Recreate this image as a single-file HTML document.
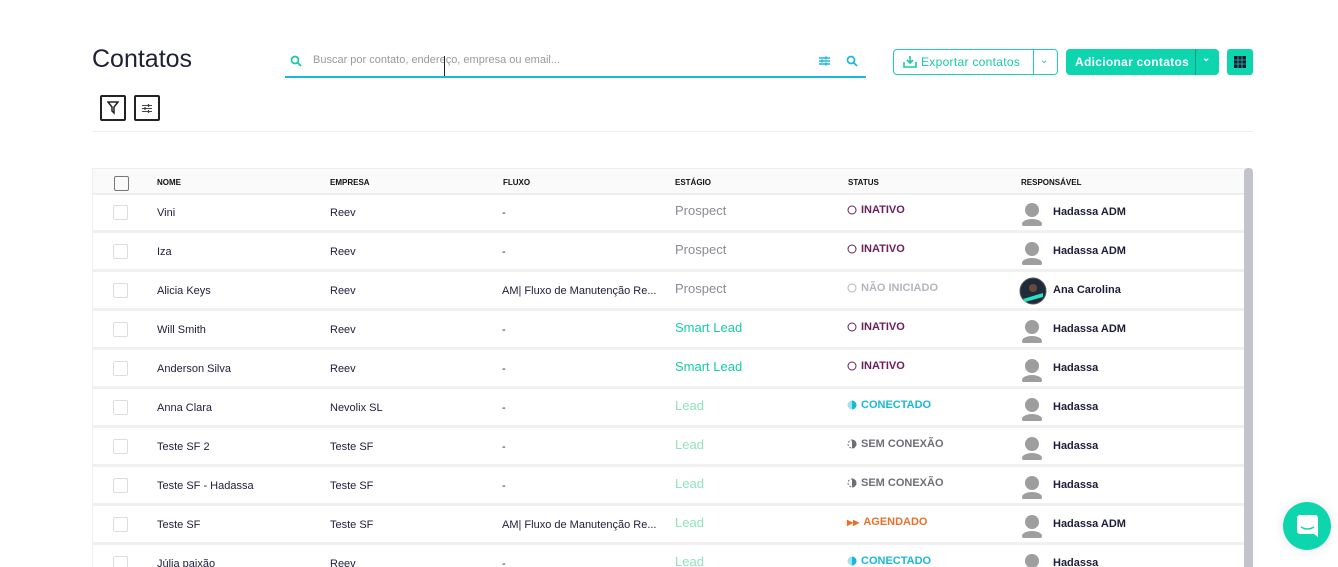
<!DOCTYPE html>
<html style="width:1338px;height:567px;overflow:hidden"><head><meta charset="utf-8"><style>
*{box-sizing:border-box;margin:0;padding:0}
body{width:1338px;height:567px;overflow:hidden;background:#fff;font-family:"Liberation Sans",sans-serif;color:#1d1d3a;position:relative}
.a{position:absolute}
h1{position:absolute;left:92px;top:45px;font-size:25px;font-weight:400;color:#1f2033}
.search{left:285px;top:46px;width:581px;height:32px;border-bottom:2px solid #1ab8d8}
.btn{height:26px;border-radius:4px;font-size:12px;display:flex;align-items:center}
.tbl{left:92px;top:168px;width:1153px;height:400px;border:1px solid #eee;border-bottom:none}
.hd{left:0;top:0;width:1153px;height:26px;background:#fafafa;border-bottom:2px solid #eee;font-size:8px;font-weight:700;color:#111}
.row{height:39px;border-bottom:3px solid #f0f0f0;font-size:11px;color:#1d1d3a}
.cb{position:absolute;left:21px;top:11px;width:15px;height:15px;border:1.5px solid #ddd;border-radius:2px}
.c{position:absolute;top:13px}
.st{font-size:13px;top:9px}
.ss{font-size:11px;font-weight:700;top:10px;display:flex;align-items:center;gap:4px}
.av{position:absolute;left:928px;top:8px;width:24px;height:24px}
.rn{position:absolute;left:961px;top:12px;font-weight:700;font-size:11px;color:#1d1d3a}
.R{position:absolute;left:92px;width:1152px}
</style></head><body>
<h1>Contatos</h1>
<div class="a search">
<svg class="a" style="left:5px;top:9px" width="12" height="12" viewBox="0 0 12 12"><circle cx="5" cy="5" r="3.5" fill="none" stroke="#14c9a6" stroke-width="1.7"/><path d="M7.5 7.5L11 11" stroke="#14c9a6" stroke-width="1.8"/></svg>
<div class="a" style="left:28px;top:8px;font-size:11px;color:#999">Buscar por contato, endereço, empresa ou email...</div>
<div class="a" style="left:159px;top:10px;width:1px;height:20px;background:#222"></div>
<svg class="a" style="left:533px;top:9px" width="13" height="12" viewBox="0 0 13 12"><path d="M1 3h11M1 6h11M1 9h11" stroke="#1ab8d8" stroke-width="1.4"/><path d="M8 1.5v3M4 4.5v3M8 7.5v3" stroke="#1ab8d8" stroke-width="1.6"/></svg>
<svg class="a" style="left:561px;top:9px" width="12" height="12" viewBox="0 0 12 12"><circle cx="5" cy="5" r="3.5" fill="none" stroke="#1ab8d8" stroke-width="1.7"/><path d="M7.5 7.5L11 11" stroke="#1ab8d8" stroke-width="1.8"/></svg>
</div>
<div class="a btn" style="left:893px;top:49px;width:165px;border:1px solid #19d3ae;color:#19c9a6;background:#fff">
<svg style="margin:0 4px 0 9px" width="14" height="12" viewBox="0 0 14 12"><path d="M7 0v7M4 4l3 3 3-3M1 6v5h12V6" fill="none" stroke="#19c9a6" stroke-width="1.6"/></svg>
<span style="font-size:12px;letter-spacing:.3px">Exportar contatos</span>
<span style="position:absolute;left:139px;top:0;height:24px;width:1px;background:#19d3ae"></span>
<span style="position:absolute;left:146px;top:5px;font-size:10px">&#8964;</span></div>
<div class="a btn" style="left:1066px;top:49px;width:153px;background:#0dd6ae;color:#fff;font-weight:700">
<span style="margin-left:9px;letter-spacing:.3px">Adicionar contatos</span>
<span style="position:absolute;left:129px;top:0;height:26px;width:1px;background:#089f85"></span>
<span style="position:absolute;left:136px;top:4px;font-size:10px">&#8964;</span></div>
<div class="a" style="left:1227px;top:49px;width:26px;height:26px;background:#0dd6ae;border-radius:3px">
<svg class="a" style="left:7px;top:7px" width="12" height="12" viewBox="0 0 12 12"><rect width="12" height="12" fill="#141432"/><path d="M0 4h12M0 8h12M4 0v12M8 0v12" stroke="#0dd6ae" stroke-width="0.8"/></svg></div>
<div class="a" style="left:100px;top:95px;width:26px;height:26px;border:2px solid #222;border-radius:2px"><svg class="a" style="left:5px;top:4px" width="12" height="14" viewBox="0 0 12 14"><path d="M1 1h10L7 6v6L5 10V6z" fill="none" stroke="#222" stroke-width="1.5"/></svg></div>
<div class="a" style="left:134px;top:95px;width:26px;height:26px;border:2px solid #222;border-radius:2px"><svg class="a" style="left:5px;top:6px" width="12" height="11" viewBox="0 0 12 11"><path d="M1 2.5h10M1 5.5h10M1 8.5h10" stroke="#444" stroke-width="1"/><path d="M7.5 1v3M4 4v3M7.5 7v3" stroke="#444" stroke-width="1.3"/></svg></div>
<div class="a" style="left:92px;top:131px;width:1161px;height:1px;background:#eee"></div>
<div class="a tbl">
<div class="a hd"><div class="cb" style="top:7px;border-color:#777;width:15px;height:15px"></div>
<span class="c" style="left:64px;top:9px">NOME</span><span class="c" style="left:237px;top:9px">EMPRESA</span><span class="c" style="left:410px;top:9px">FLUXO</span><span class="c" style="left:582px;top:9px">ESTÁGIO</span><span class="c" style="left:755px;top:9px">STATUS</span><span class="c" style="left:928px;top:9px">RESPONSÁVEL</span></div>
</div>
<div class="R row" style="top:194px"><div class="cb"></div><span class="c" style="left:65px">Vini</span><span class="c" style="left:238px">Reev</span><span class="c" style="left:410px">-</span><span class="c st" style="left:583px;color:#8a8a95">Prospect</span><span class="c ss" style="left:755px;color:#6b1d5c"><svg width="10" height="10"><circle cx="5" cy="5" r="4" fill="none" stroke="#6b1d5c"/></svg>INATIVO</span><svg class="av"><circle cx="12" cy="8" r="7" fill="#9e9e9e"/><ellipse cx="12" cy="22" rx="10" ry="5" fill="#9e9e9e"/></svg><span class="rn">Hadassa ADM</span></div>
<div class="R row" style="top:233px"><div class="cb"></div><span class="c" style="left:65px">Iza</span><span class="c" style="left:238px">Reev</span><span class="c" style="left:410px">-</span><span class="c st" style="left:583px;color:#8a8a95">Prospect</span><span class="c ss" style="left:755px;color:#6b1d5c"><svg width="10" height="10"><circle cx="5" cy="5" r="4" fill="none" stroke="#6b1d5c"/></svg>INATIVO</span><svg class="av"><circle cx="12" cy="8" r="7" fill="#9e9e9e"/><ellipse cx="12" cy="22" rx="10" ry="5" fill="#9e9e9e"/></svg><span class="rn">Hadassa ADM</span></div>
<div class="R row" style="top:272px"><div class="cb"></div><span class="c" style="left:65px">Alicia Keys</span><span class="c" style="left:238px">Reev</span><span class="c" style="left:410px">AM| Fluxo de Manutenção Re...</span><span class="c st" style="left:583px;color:#8a8a95">Prospect</span><span class="c ss" style="left:755px;color:#b5b5bd"><svg width="10" height="10"><circle cx="5" cy="5" r="4" fill="none" stroke="#b5b5bd"/></svg>NÃO INICIADO</span><svg class="av" style="left:927px;top:5px;width:28px;height:28px"><circle cx="14" cy="14" r="13" fill="#1f2b3a" stroke="#555"/><circle cx="14" cy="11" r="4" fill="#6b4a3a"/><path d="M4 22l20-6v4L6 25z" fill="#2de0c0"/></svg><span class="rn">Ana Carolina</span></div>
<div class="R row" style="top:311px"><div class="cb"></div><span class="c" style="left:65px">Will Smith</span><span class="c" style="left:238px">Reev</span><span class="c" style="left:410px">-</span><span class="c st" style="left:583px;color:#17cda5">Smart Lead</span><span class="c ss" style="left:755px;color:#6b1d5c"><svg width="10" height="10"><circle cx="5" cy="5" r="4" fill="none" stroke="#6b1d5c"/></svg>INATIVO</span><svg class="av"><circle cx="12" cy="8" r="7" fill="#9e9e9e"/><ellipse cx="12" cy="22" rx="10" ry="5" fill="#9e9e9e"/></svg><span class="rn">Hadassa ADM</span></div>
<div class="R row" style="top:350px"><div class="cb"></div><span class="c" style="left:65px">Anderson Silva</span><span class="c" style="left:238px">Reev</span><span class="c" style="left:410px">-</span><span class="c st" style="left:583px;color:#17cda5">Smart Lead</span><span class="c ss" style="left:755px;color:#6b1d5c"><svg width="10" height="10"><circle cx="5" cy="5" r="4" fill="none" stroke="#6b1d5c"/></svg>INATIVO</span><svg class="av"><circle cx="12" cy="8" r="7" fill="#9e9e9e"/><ellipse cx="12" cy="22" rx="10" ry="5" fill="#9e9e9e"/></svg><span class="rn">Hadassa</span></div>
<div class="R row" style="top:389px"><div class="cb"></div><span class="c" style="left:65px">Anna Clara</span><span class="c" style="left:238px">Nevolix SL</span><span class="c" style="left:410px">-</span><span class="c st" style="left:583px;color:#8fe3bd">Lead</span><span class="c ss" style="left:755px;color:#1ab8d8"><svg width="10" height="10"><circle cx="5" cy="5" r="4.5" fill="#9fe3f0"/><path d="M5 0.5a4.5 4.5 0 0 1 0 9z" fill="#1ab8d8"/></svg>CONECTADO</span><svg class="av"><circle cx="12" cy="8" r="7" fill="#9e9e9e"/><ellipse cx="12" cy="22" rx="10" ry="5" fill="#9e9e9e"/></svg><span class="rn">Hadassa</span></div>
<div class="R row" style="top:428px"><div class="cb"></div><span class="c" style="left:65px">Teste SF 2</span><span class="c" style="left:238px">Teste SF</span><span class="c" style="left:410px">-</span><span class="c st" style="left:583px;color:#8fe3bd">Lead</span><span class="c ss" style="left:755px;color:#6e6e7a"><svg width="10" height="10"><circle cx="5" cy="5" r="4" fill="none" stroke="#6e6e7a" stroke-dasharray="2 1.5"/><path d="M5 0.5a4.5 4.5 0 0 1 0 9z" fill="#6e6e7a"/></svg>SEM CONEXÃO</span><svg class="av"><circle cx="12" cy="8" r="7" fill="#9e9e9e"/><ellipse cx="12" cy="22" rx="10" ry="5" fill="#9e9e9e"/></svg><span class="rn">Hadassa</span></div>
<div class="R row" style="top:467px"><div class="cb"></div><span class="c" style="left:65px">Teste SF - Hadassa</span><span class="c" style="left:238px">Teste SF</span><span class="c" style="left:410px">-</span><span class="c st" style="left:583px;color:#8fe3bd">Lead</span><span class="c ss" style="left:755px;color:#6e6e7a"><svg width="10" height="10"><circle cx="5" cy="5" r="4" fill="none" stroke="#6e6e7a" stroke-dasharray="2 1.5"/><path d="M5 0.5a4.5 4.5 0 0 1 0 9z" fill="#6e6e7a"/></svg>SEM CONEXÃO</span><svg class="av"><circle cx="12" cy="8" r="7" fill="#9e9e9e"/><ellipse cx="12" cy="22" rx="10" ry="5" fill="#9e9e9e"/></svg><span class="rn">Hadassa</span></div>
<div class="R row" style="top:506px"><div class="cb"></div><span class="c" style="left:65px">Teste SF</span><span class="c" style="left:238px">Teste SF</span><span class="c" style="left:410px">AM| Fluxo de Manutenção Re...</span><span class="c st" style="left:583px;color:#8fe3bd">Lead</span><span class="c ss" style="left:755px;color:#e8702a"><span style="font-size:8px">&#9654;&#9654;</span>AGENDADO</span><svg class="av"><circle cx="12" cy="8" r="7" fill="#9e9e9e"/><ellipse cx="12" cy="22" rx="10" ry="5" fill="#9e9e9e"/></svg><span class="rn">Hadassa ADM</span></div>
<div class="R row" style="top:545px"><div class="cb"></div><span class="c" style="left:65px">Júlia paixão</span><span class="c" style="left:238px">Reev</span><span class="c" style="left:410px">-</span><span class="c st" style="left:583px;color:#8fe3bd">Lead</span><span class="c ss" style="left:755px;color:#1ab8d8"><svg width="10" height="10"><circle cx="5" cy="5" r="4.5" fill="#9fe3f0"/><path d="M5 0.5a4.5 4.5 0 0 1 0 9z" fill="#1ab8d8"/></svg>CONECTADO</span><svg class="av"><circle cx="12" cy="8" r="7" fill="#9e9e9e"/><ellipse cx="12" cy="22" rx="10" ry="5" fill="#9e9e9e"/></svg><span class="rn">Hadassa</span></div>
<div class="a" style="left:1244px;top:168px;width:9px;height:399px;background:#c1c4ca;border-radius:4px 4px 0 0"></div>
<div class="a" style="left:1283px;top:502px;width:48px;height:48px;border-radius:50%;background:#0dd6ae;box-shadow:0 0 12px rgba(0,0,0,.1)">
<svg class="a" style="left:14px;top:13px" width="21" height="22" viewBox="0 0 21 22"><path d="M3 0h15a3 3 0 0 1 3 3v19l-4-3H3a3 3 0 0 1-3-3V3a3 3 0 0 1 3-3z" fill="#fff"/><path d="M4 12q6.5 4 13 0" fill="none" stroke="#0dd6ae" stroke-width="1.5"/></svg></div>
</body></html>
